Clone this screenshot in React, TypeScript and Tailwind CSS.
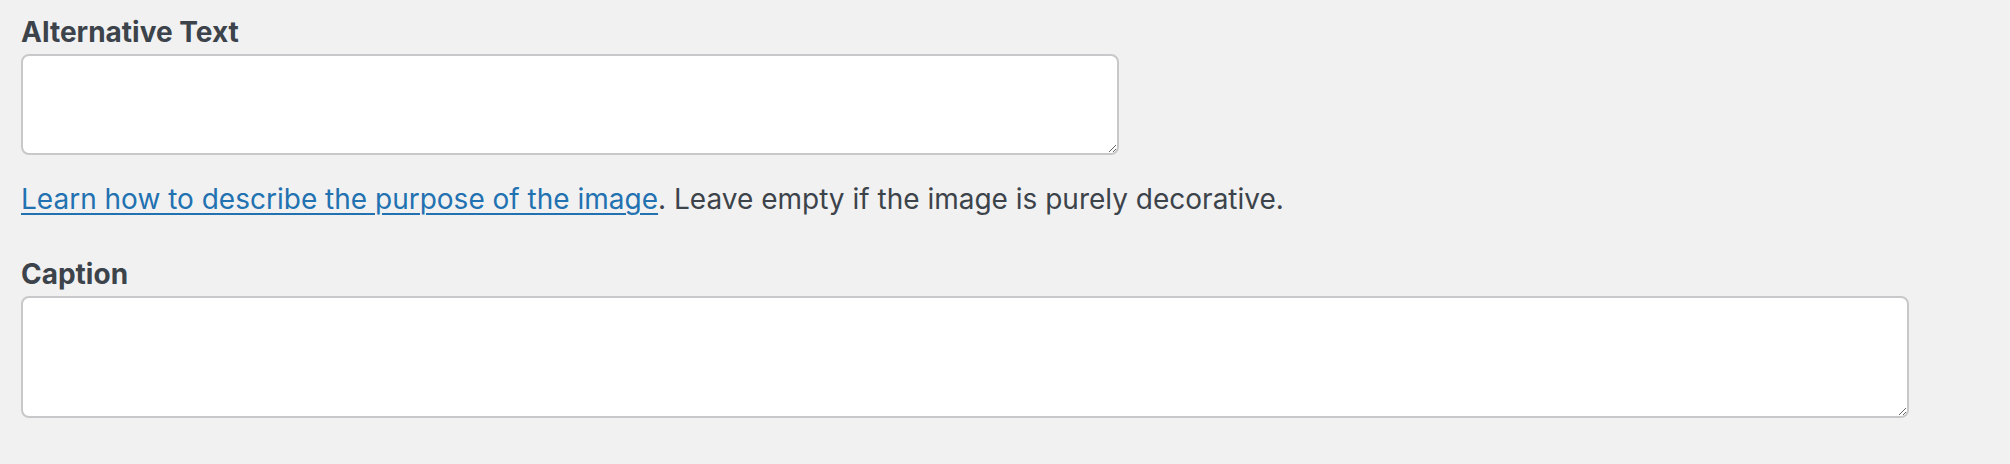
export default function App() {
  return (
    <div
      className="h-[464px] w-full bg-[#f1f1f1] px-[21px] pt-[14px] text-[#3c434a]"
      style={{ fontFamily: 'Inter, "Noto Sans", sans-serif' }}
    >
      <label className="block text-[28px] font-bold leading-[37px]">Alternative Text</label>
      <textarea
        className="mt-[3px] block h-[101px] w-[1098px] resize rounded-[8px] border-2 border-[#c8c8ca] bg-white outline-none"
        aria-label="Alternative Text"
      />
      <p className="mt-[24px] text-[28px] leading-[40px]">
        <a href="#" className="text-[#2271b1] underline decoration-2 underline-offset-[4px]">
          Learn how to describe the purpose of the image
        </a>
        . Leave empty if the image is purely decorative.
      </p>
      <label className="mt-[37px] block text-[28px] font-bold leading-[37px]">Caption</label>
      <textarea
        className="mt-[3px] block h-[122px] w-[1888px] resize rounded-[8px] border-2 border-[#c8c8ca] bg-white outline-none"
        aria-label="Caption"
      />
    </div>
  );
}
